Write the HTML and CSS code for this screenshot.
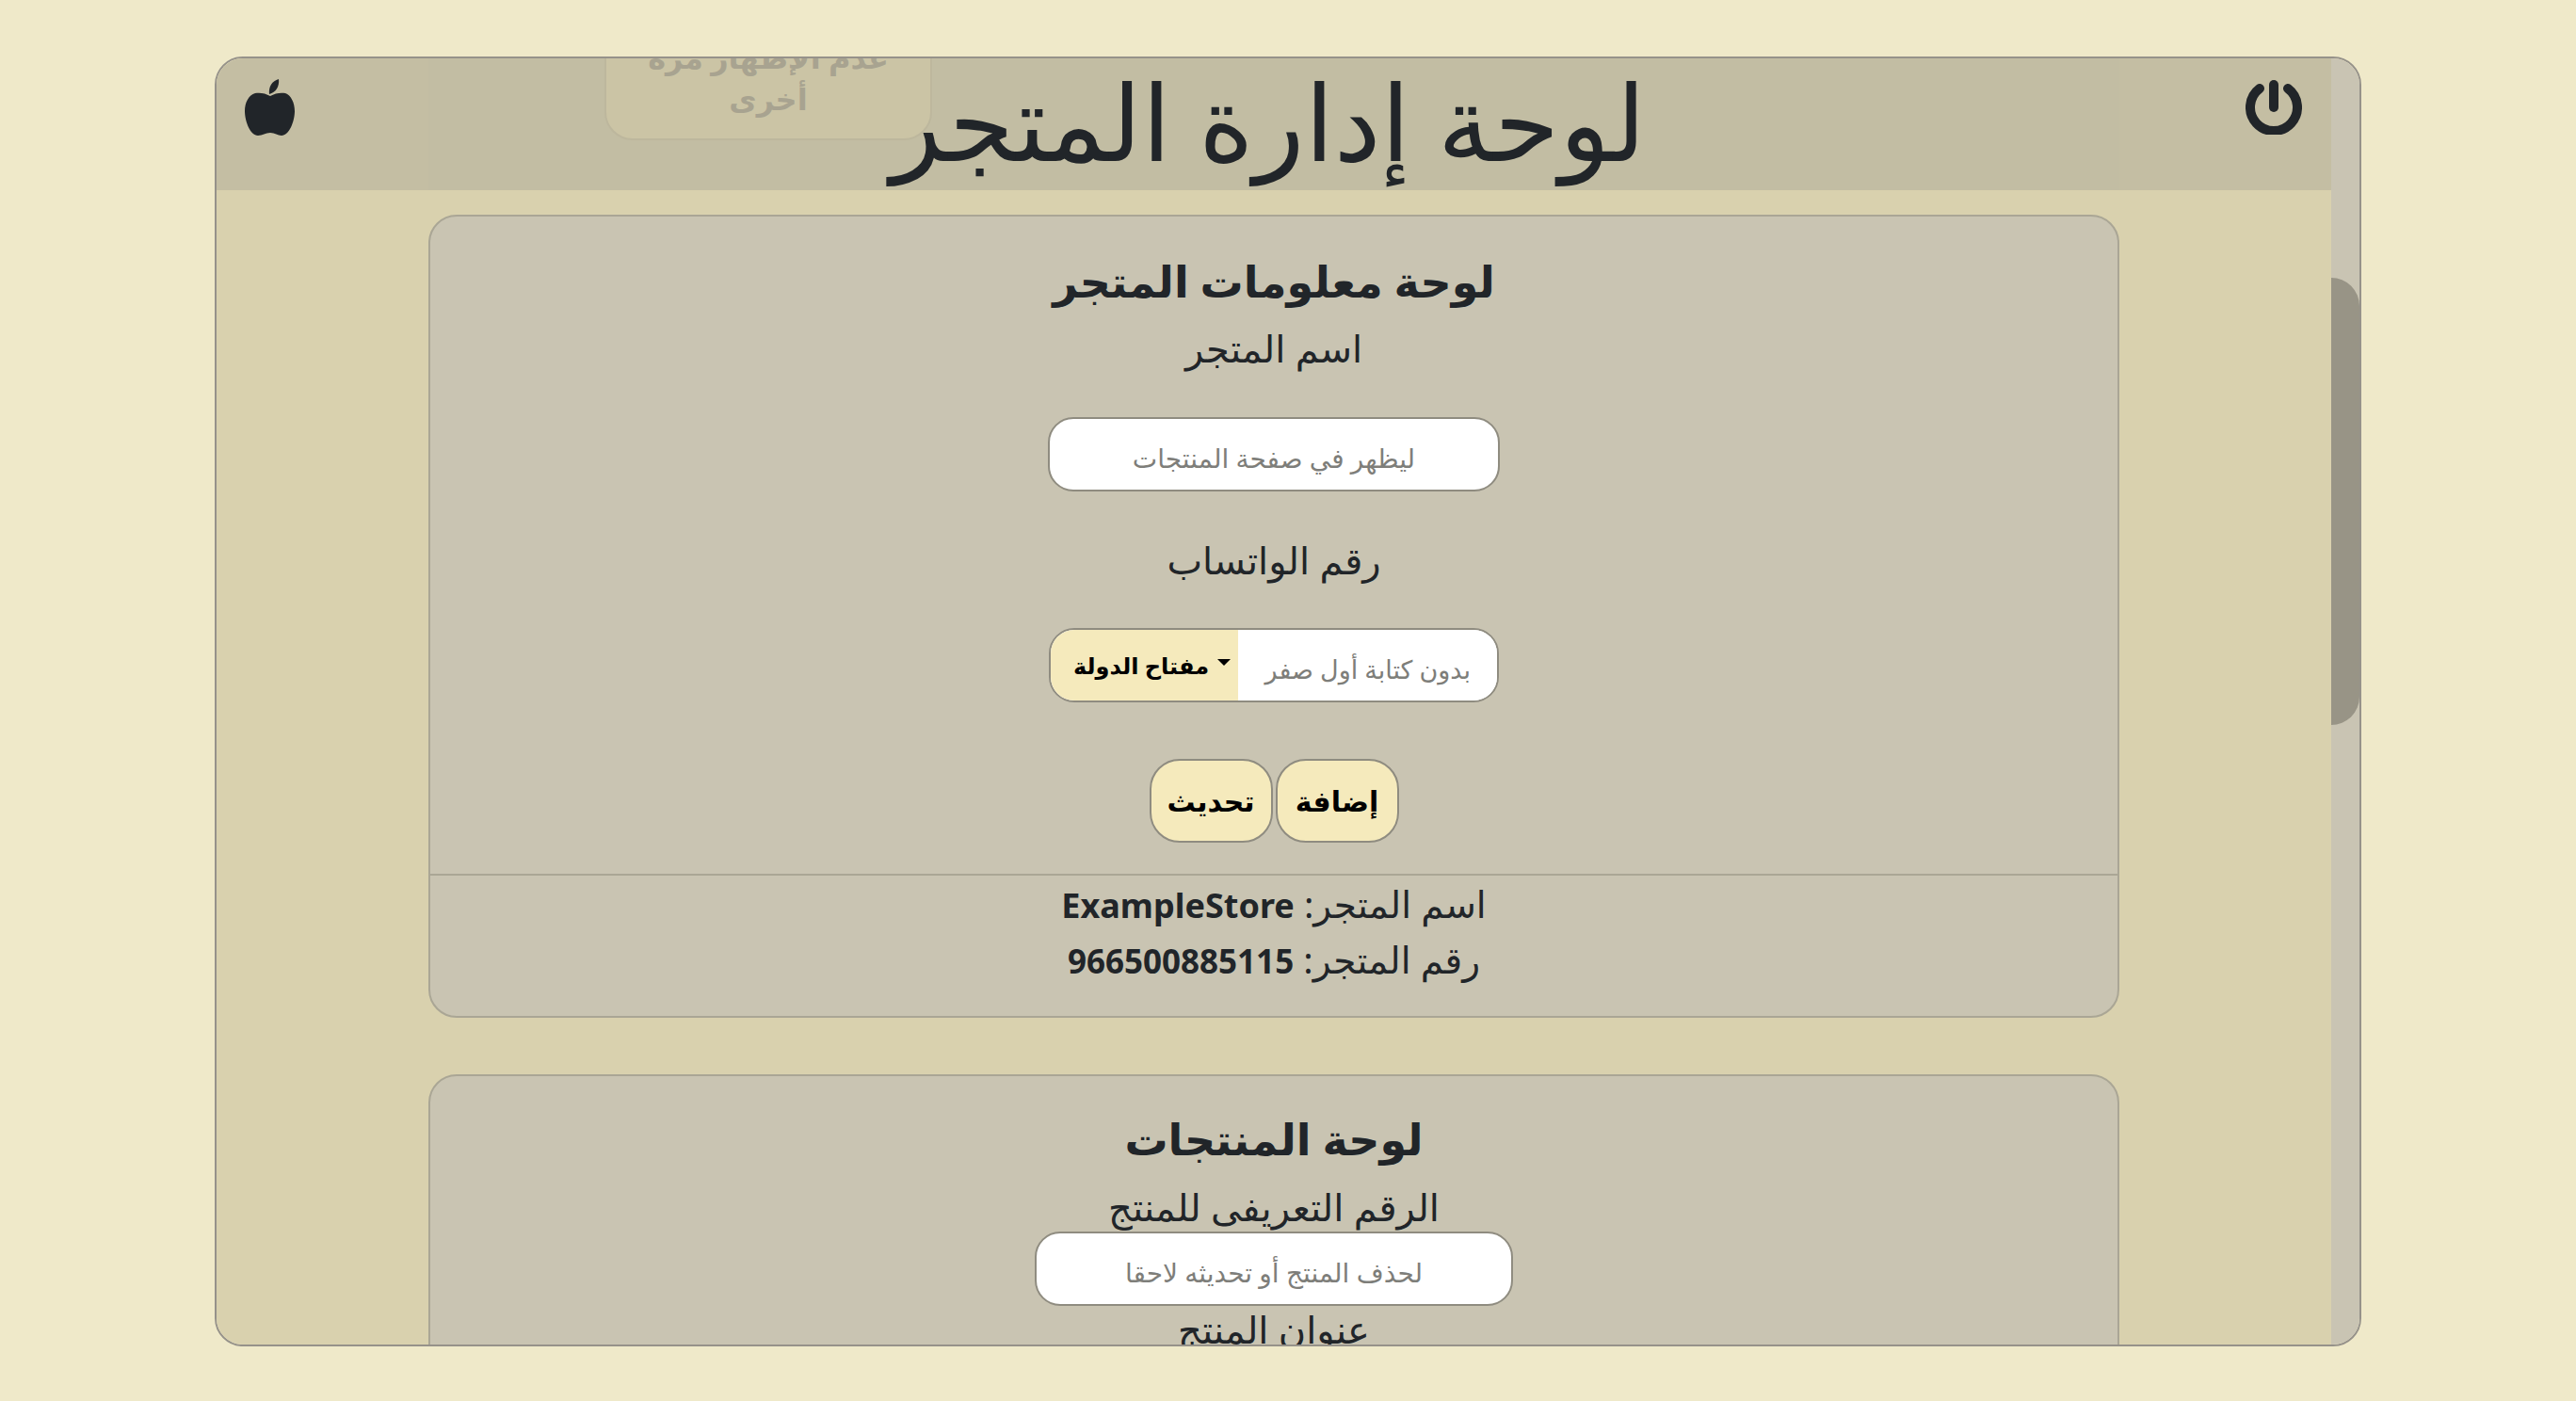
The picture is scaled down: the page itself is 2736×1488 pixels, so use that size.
FILE: index.html
```html
<!DOCTYPE html>
<html lang="ar" dir="rtl">
<head>
    <meta charset="UTF-8">
    <meta name="viewport" content="width=device-width, initial-scale=1.0">
    <title>لوحة إدارة المتجر</title>
    <link rel="stylesheet" href="styles.css">
</head>
<body>
    <div class="window">
        <div class="scroll-area">
            <div class="content">
                <div class="hidden-card"></div>

                <div class="card">
                    <h2 class="card-title">لوحة معلومات المتجر</h2>
                    <div class="form-label">اسم المتجر</div>
                    <input class="text-input store-input" type="text" placeholder="ليظهر في صفحة المنتجات">
                    <div class="form-label whatsapp-label">رقم الواتساب</div>
                    <div class="input-group">
                        <input type="text" placeholder="بدون كتابة أول صفر">
                        <button class="dropdown-btn">مفتاح الدولة<span class="caret"></span></button>
                    </div>
                    <div class="btn-row">
                        <button class="yellow-btn">إضافة</button>
                        <button class="yellow-btn">تحديث</button>
                    </div>
                    <div class="store-info">
                        <div>اسم المتجر: <b dir="ltr">ExampleStore</b></div>
                        <div>رقم المتجر: <b class="store-number" dir="ltr">966500885115</b></div>
                    </div>
                </div>

                <div class="card products-card">
                    <h2 class="card-title">لوحة المنتجات</h2>
                    <div class="form-label product-id-label">الرقم التعريفى للمنتج</div>
                    <input class="text-input product-input" type="text" placeholder="لحذف المنتج أو تحديثه لاحقا">
                    <div class="form-label product-title-label">عنوان المنتج</div>
                </div>
            </div>

            <div class="topbar">
                <svg class="power-icon" viewBox="0 0 60 58">
                    <path d="M45 9A25 25 0 1 1 15 9" fill="none" stroke="#212529" stroke-width="10" stroke-linecap="round"/>
                    <path d="M30 5V29" fill="none" stroke="#212529" stroke-width="10" stroke-linecap="round"/>
                </svg>
                <h1 class="page-title">لوحة إدارة المتجر</h1>
                <svg class="apple-icon" viewBox="0 0 53 60">
                    <path fill="#212529" d="M27 18C22 15 16 14 11 15C4 17 0 25 0 34C0 45 6 60 14 60C19 60 22 57 27 57C32 57 35 60 39 60C47 60 53 45 53 34C53 25 49 17 43 15C38 14 32 15 27 18Z"/>
                    <path fill="#212529" d="M26 16C25 8 29 2 36 0C37 8 33 14 26 16Z"/>
                </svg>
            </div>

            <div class="ghost-toast">عدم الإظهار مرة أخرى</div>
        </div>

        <div class="scrollbar">
            <div class="scrollbar-thumb"></div>
        </div>
    </div>
</body>
</html>
```

FILE: styles.css
```css
* {
    box-sizing: border-box;
}
html, body {
    height: 100%;
}
body {
    margin: 0;
    overflow: hidden;
    background-color: #efe9c9;
    color: #212529;
    font-family: "Noto Sans", "DejaVu Sans", sans-serif;
}
.window {
    display: flex;
    flex-direction: row-reverse;
    width: 2280px;
    height: 1370px;
    margin: 60px auto 0;
    border: 2px solid #96928a;
    border-radius: 30px;
    overflow: hidden;
}
.scroll-area {
    position: relative;
    flex: 1;
    overflow: hidden;
    background-color: #d9d1ae;
}
.scrollbar {
    width: 30px;
    padding-top: 233px;
    background-color: #c9c4b3;
}
.scrollbar-thumb {
    height: 475px;
    background-color: #989486;
    border-radius: 0 30px 30px 0;
}

/* header */
.topbar {
    position: absolute;
    top: 0;
    left: 0;
    right: 0;
    height: 140px;
    display: flex;
    justify-content: space-between;
    align-items: flex-start;
    padding: 23px 31px 0 30px;
    background-color: rgba(193, 187, 161, 0.875);
}
.power-icon {
    width: 60px;
    height: 58px;
}
.apple-icon {
    width: 53px;
    height: 60px;
    margin-top: -1px;
}
.page-title {
    position: relative;
    z-index: 2;
    margin: -42px 4px 0 0;
    font-size: 112px;
    line-height: 170px;
    font-weight: 400;
}
.ghost-toast {
    position: absolute;
    z-index: 1;
    top: -50px;
    left: 412px;
    width: 348px;
    height: 137px;
    padding: 25px 20px 0;
    background-color: #cbc4a5;
    border: 2px solid #bdb79d;
    border-radius: 30px;
    color: #a8a390;
    font-size: 32px;
    line-height: 44px;
    font-weight: 700;
    text-align: center;
}

/* cards */
.content {
    display: flex;
    flex-direction: column;
    align-items: center;
}
.hidden-card {
    width: 1796px;
    height: 140px;
    margin-bottom: 26px;
    background-color: #c9c4b2;
}
.card {
    display: flex;
    flex-direction: column;
    align-items: center;
    width: 1796px;
    padding-top: 38px;
    background-color: #c9c4b2;
    border: 2px solid #aaa695;
    border-radius: 30px;
}
.products-card {
    margin-top: 60px;
    padding-top: 36px;
    padding-bottom: 120px;
}
.card-title {
    margin: 0;
    font-size: 46px;
    line-height: 60px;
    font-weight: 700;
}
.form-label {
    margin-top: 18px;
    font-size: 40px;
    line-height: 48px;
}
.whatsapp-label {
    margin-top: 49px;
}
.product-id-label {
    margin-top: 20px;
    height: 49px;
    line-height: 46px;
}
.product-title-label {
    margin-top: 0;
    line-height: 50px;
}
.text-input, .input-group {
    height: 79px;
    background-color: #fff;
    border: 2px solid #8f8c80;
    border-radius: 27px;
}
.text-input {
    padding: 6px 0 0;
    text-align: center;
    font-family: inherit;
    font-size: 28px;
}
.store-input {
    width: 480px;
    margin-top: 49px;
}
.product-input {
    width: 508px;
}
input::placeholder {
    color: #7e7e7a;
    opacity: 1;
}
.input-group {
    display: flex;
    width: 478px;
    margin-top: 48px;
    overflow: hidden;
}
.input-group input {
    flex: 1;
    width: 0;
    padding: 8px 28px 0 20px;
    border: 0;
    outline: 0;
    font-family: inherit;
    font-size: 27px;
}
.dropdown-btn {
    display: flex;
    align-items: center;
    justify-content: center;
    gap: 9px;
    width: 199px;
    padding: 0 0 0 16px;
    background-color: #f5eabc;
    border: 0;
    color: #000;
    font-family: inherit;
    font-size: 24px;
    font-weight: 700;
}
.caret {
    order: -1;
    margin-top: -6px;
    border-top: 7px solid #000;
    border-left: 7px solid transparent;
    border-right: 7px solid transparent;
}
.btn-row {
    display: flex;
    gap: 3px;
    margin-top: 60px;
}
.yellow-btn {
    width: 131px;
    height: 89px;
    padding: 0;
    background-color: #f5eabc;
    border: 2px solid #8f8c80;
    border-radius: 32px;
    color: #000;
    font-family: inherit;
    font-size: 30px;
    font-weight: 700;
}
.store-info {
    width: 100%;
    margin-top: 33px;
    padding-bottom: 31px;
    border-top: 2px solid #aaa695;
    font-size: 39px;
    text-align: center;
}
.store-info div {
    height: 59px;
    line-height: 59px;
}
.store-info b {
    font-size: 36px;
    font-weight: 700;
}
.store-info .store-number {
    font-size: 35px;
}
```
